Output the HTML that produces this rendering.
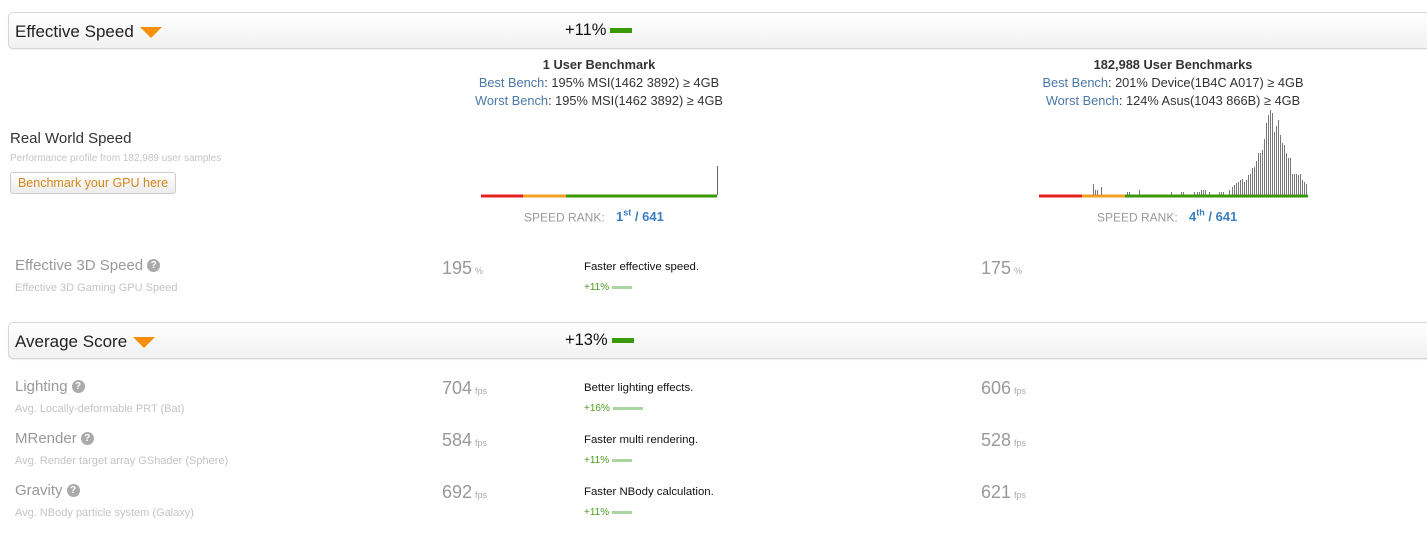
<!DOCTYPE html>
<html><head><meta charset="utf-8"><style>
*{margin:0;padding:0;box-sizing:border-box}
body{width:1427px;height:540px;background:#fff;font-family:"Liberation Sans",Arial,sans-serif;position:relative;overflow:hidden;color:#333}
.a{position:absolute;white-space:nowrap}
.hdr{position:absolute;left:8px;width:1440px;height:37px;border:1px solid #d6d6d6;border-radius:5px;background:linear-gradient(#fff,#f1f1f1);box-shadow:0 1px 1px #eee}
.ht{font-size:17px;color:#222}
.tri{display:inline-block;width:0;height:0;border-left:11px solid transparent;border-right:11px solid transparent;border-top:11px solid #f88f0c;vertical-align:middle;margin-left:6px}
.pct{font-size:16.5px;color:#111}
.gb{display:inline-block;width:22px;height:5px;background:#3a9a06;vertical-align:middle;margin-left:4px}
.c{text-align:center;font-size:12.8px;color:#333}
.bl{color:#4a78a8}
.lab{font-size:15px;color:#999}
.sub{font-size:11px;color:#c4c4c4}
.num{font-size:18px;color:#999}
.num small{font-size:9px;color:#aaa;margin-left:3px}
.desc{font-size:11.4px;color:#111}
.gp{font-size:10px;color:#4a9a1a}
.gp i{display:inline-block;height:3px;background:#a9d7a0;vertical-align:middle;margin-left:3px}
.q{display:inline-block;width:13px;height:13px;border-radius:50%;background:#aaa;color:#fff;font-size:10px;font-weight:bold;text-align:center;line-height:13px;vertical-align:2px;margin-left:4px}
.rank{font-size:12px;color:#999}
.rank b{color:#3a7ec0;font-size:13px;margin-left:8px}
.rank sup{font-size:9px}
</style></head><body>

<div class="hdr" style="top:12px"></div>
<div class="a ht" style="left:15px;top:22px">Effective Speed<span class="tri"></span></div>
<div class="a pct" style="left:565px;top:21px">+11%<span class="gb"></span></div>

<div class="a c" style="left:449px;width:300px;top:57px;font-weight:bold">1 User Benchmark</div>
<div class="a c" style="left:449px;width:300px;top:75px"><span class="bl">Best Bench</span>: 195% MSI(1462 3892) ≥ 4GB</div>
<div class="a c" style="left:449px;width:300px;top:93px"><span class="bl">Worst Bench</span>: 195% MSI(1462 3892) ≥ 4GB</div>

<div class="a c" style="left:1023px;width:300px;top:57px;font-weight:bold">182,988 User Benchmarks</div>
<div class="a c" style="left:1023px;width:300px;top:75px"><span class="bl">Best Bench</span>: 201% Device(1B4C A017) ≥ 4GB</div>
<div class="a c" style="left:1023px;width:300px;top:93px"><span class="bl">Worst Bench</span>: 124% Asus(1043 866B) ≥ 4GB</div>

<div class="a" style="left:10px;top:130px;font-size:15px;color:#333">Real World Speed</div>
<div class="a sub" style="left:10px;top:153px;font-size:10px">Performance profile from 182,989 user samples</div>
<div class="a" style="left:10px;top:172px;width:166px;height:22px;border:1px solid #ccc;border-radius:3px;background:linear-gradient(#fff,#ececec);font-size:12.5px;color:#d4861a;text-align:center;line-height:20px;font-weight:normal">Benchmark your GPU here</div>

<svg class="a" style="left:0;top:0" width="1427" height="230">
<rect x="481" y="194.5" width="42" height="3" fill="#e52020"/>
<rect x="523" y="194.5" width="43" height="3" fill="#f5a020"/>
<rect x="566" y="194.5" width="151" height="3" fill="#3a9a06"/>
<path d="M717.5 166V195" stroke="#666" stroke-width="1"/>
<rect x="1039" y="194.5" width="43" height="3" fill="#e52020"/>
<rect x="1082" y="194.5" width="43" height="3" fill="#f5a020"/>
<rect x="1125" y="194.5" width="183" height="3" fill="#3a9a06"/>
<path stroke="#777" stroke-width="1" d="M1093.5 184V195M1095.5 190V195M1097.5 190V195M1101.5 187V195M1127.5 192V195M1129.5 192V195M1139.5 190V195M1171.5 192V195M1181.5 192V195M1183.5 192V195M1194.5 192V195M1197.5 192V195M1199.5 192V195M1201.5 190V195M1203.5 190V195M1205.5 190V195M1209.5 192V195M1219.5 192V195M1221.5 192V195M1223.5 192V195M1229.5 190V195
M1232.5 187V195M1234.5 185V195M1236.5 183V195M1238.5 182V195M1240.5 180V195M1242.5 179V195M1244.5 182V195M1246.5 180V195M1248.5 175V195M1250.5 174V195M1252.5 168V195M1254.5 167V195M1256.5 161V195M1258.5 153V195M1260.5 153V195M1262.5 150V195M1264.5 139V195M1266.5 123V195M1268.5 115V195M1270.5 110V195M1272.5 113V195M1274.5 132V195M1276.5 126V195M1278.5 120V195M1280.5 135V195M1282.5 143V195M1284.5 145V195M1286.5 153V195M1288.5 158V195M1290.5 158V195M1292.5 174V195M1294.5 174V195M1296.5 174V195M1298.5 175V195M1300.5 174V195M1302.5 180V195M1304.5 182V195M1306.5 184V195"/>
</svg>

<div class="a rank" style="left:524px;top:208px">SPEED RANK: <b>1<sup>st</sup> / 641</b></div>
<div class="a rank" style="left:1097px;top:208px">SPEED RANK: <b>4<sup>th</sup> / 641</b></div>

<div class="a lab" style="left:15px;top:257px">Effective 3D Speed<span class="q">?</span></div>
<div class="a sub" style="left:15px;top:282px">Effective 3D Gaming GPU Speed</div>
<div class="a num" style="left:442px;top:258px">195<small>%</small></div>
<div class="a desc" style="left:584px;top:261px">Faster effective speed.</div>
<div class="a gp" style="left:584px;top:282px">+11%<i style="width:20px"></i></div>
<div class="a num" style="left:981px;top:258px">175<small>%</small></div>

<div class="hdr" style="top:322px"></div>
<div class="a ht" style="left:15px;top:332px">Average Score<span class="tri"></span></div>
<div class="a pct" style="left:565px;top:331px">+13%<span class="gb"></span></div>

<div class="a lab" style="left:15px;top:378px">Lighting<span class="q">?</span></div>
<div class="a sub" style="left:15px;top:403px">Avg. Locally-deformable PRT (Bat)</div>
<div class="a num" style="left:442px;top:378px">704<small>fps</small></div>
<div class="a desc" style="left:584px;top:382px">Better lighting effects.</div>
<div class="a gp" style="left:584px;top:403px">+16%<i style="width:30px"></i></div>
<div class="a num" style="left:981px;top:378px">606<small>fps</small></div>

<div class="a lab" style="left:15px;top:430px">MRender<span class="q">?</span></div>
<div class="a sub" style="left:15px;top:455px">Avg. Render target array GShader (Sphere)</div>
<div class="a num" style="left:442px;top:430px">584<small>fps</small></div>
<div class="a desc" style="left:584px;top:434px">Faster multi rendering.</div>
<div class="a gp" style="left:584px;top:455px">+11%<i style="width:20px"></i></div>
<div class="a num" style="left:981px;top:430px">528<small>fps</small></div>

<div class="a lab" style="left:15px;top:482px">Gravity<span class="q">?</span></div>
<div class="a sub" style="left:15px;top:507px">Avg. NBody particle system (Galaxy)</div>
<div class="a num" style="left:442px;top:482px">692<small>fps</small></div>
<div class="a desc" style="left:584px;top:486px">Faster NBody calculation.</div>
<div class="a gp" style="left:584px;top:507px">+11%<i style="width:20px"></i></div>
<div class="a num" style="left:981px;top:482px">621<small>fps</small></div>

</body></html>
